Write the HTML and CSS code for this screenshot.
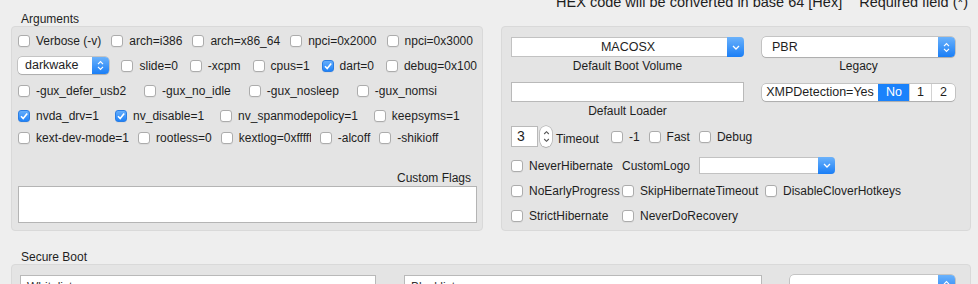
FILE: index.html
```html
<!DOCTYPE html>
<html lang="en">
<head>
    <meta charset="UTF-8">
    <meta name="viewport" content="width=device-width, initial-scale=1.0">
    <title>Boot Arguments</title>
    <link rel="stylesheet" href="styles.css">
</head>
<body>
<div class="window">
    <div class="columns">
        <!-- Arguments -->
        <section class="group">
            <div class="group-head"><h2>Arguments</h2></div>
            <div class="panel args">
                <div class="row r1">
                    <label class="check"><span class="box"></span>Verbose (-v)</label>
                    <label class="check"><span class="box"></span>arch=i386</label>
                    <label class="check"><span class="box"></span>arch=x86_64</label>
                    <label class="check"><span class="box"></span>npci=0x2000</label>
                    <label class="check"><span class="box"></span>npci=0x3000</label>
                </div>
                <div class="row r2">
                    <div class="popup dark">
                        <span class="value">darkwake</span>
                        <span class="arrow"><svg width="7" height="11" viewBox="0 0 7 11"><path d="M1 4.2l2.5-2.5L6 4.2M1 6.8l2.5 2.5L6 6.8" fill="none" stroke="#fff" stroke-width="1.2"/></svg></span>
                    </div>
                    <label class="check"><span class="box"></span>slide=0</label>
                    <label class="check"><span class="box"></span>-xcpm</label>
                    <label class="check"><span class="box"></span>cpus=1</label>
                    <label class="check"><span class="box on"><svg width="10" height="10" viewBox="0 0 10 10"><path d="M2 5.2l2.2 2.3L8.2 2.6" fill="none" stroke="#fff" stroke-width="1.6"/></svg></span>dart=0</label>
                    <label class="check"><span class="box"></span>debug=0x100</label>
                </div>
                <div class="row r3">
                    <label class="check"><span class="box"></span>-gux_defer_usb2</label>
                    <label class="check"><span class="box"></span>-gux_no_idle</label>
                    <label class="check"><span class="box"></span>-gux_nosleep</label>
                    <label class="check"><span class="box"></span>-gux_nomsi</label>
                </div>
                <div class="row r4">
                    <label class="check"><span class="box on"><svg width="10" height="10" viewBox="0 0 10 10"><path d="M2 5.2l2.2 2.3L8.2 2.6" fill="none" stroke="#fff" stroke-width="1.6"/></svg></span>nvda_drv=1</label>
                    <label class="check"><span class="box on"><svg width="10" height="10" viewBox="0 0 10 10"><path d="M2 5.2l2.2 2.3L8.2 2.6" fill="none" stroke="#fff" stroke-width="1.6"/></svg></span>nv_disable=1</label>
                    <label class="check"><span class="box"></span>nv_spanmodepolicy=1</label>
                    <label class="check"><span class="box"></span>keepsyms=1</label>
                </div>
                <div class="row r5">
                    <label class="check"><span class="box"></span>kext-dev-mode=1</label>
                    <label class="check"><span class="box"></span>rootless=0</label>
                    <label class="check"><span class="box"></span><span class="clip">kextlog=0xffffffff</span></label>
                    <label class="check"><span class="box"></span>-alcoff</label>
                    <label class="check"><span class="box"></span>-shikioff</label>
                </div>
                <div class="custom">
                    <div class="custom-label">Custom Flags</div>
                    <textarea class="flags"></textarea>
                </div>
            </div>
        </section>

        <!-- Boot -->
        <section class="group">
            <div class="group-head">
                <div class="note">
                    <span>HEX code will be converted in base 64 [Hex]</span>
                    <span>Required field (*)</span>
                </div>
            </div>
            <div class="panel boot">
                <div class="boot-top">
                    <div class="col">
                        <div class="popup square">
                            <span class="value center">MACOSX</span>
                            <span class="arrow"><svg width="8" height="5" viewBox="0 0 8 5"><path d="M1 1l3 3 3-3" fill="none" stroke="#fff" stroke-width="1.3"/></svg></span>
                        </div>
                        <div class="caption">Default Boot Volume</div>
                        <div class="field loader"></div>
                        <div class="caption">Default Loader</div>
                    </div>
                    <div class="col">
                        <div class="popup tall">
                            <span class="value">PBR</span>
                            <span class="arrow"><svg width="7" height="11" viewBox="0 0 7 11"><path d="M1 4.2l2.5-2.5L6 4.2M1 6.8l2.5 2.5L6 6.8" fill="none" stroke="#fff" stroke-width="1.2"/></svg></span>
                        </div>
                        <div class="caption">Legacy</div>
                        <div class="seg">
                            <span>XMPDetection=Yes</span>
                            <span class="sel">No</span>
                            <span>1</span>
                            <span>2</span>
                        </div>
                    </div>
                </div>

                <div class="timeout-row">
                    <div class="number">3</div>
                    <div class="stepper"><svg width="7" height="17" viewBox="0 0 7 17"><path d="M1.2 6l2.3-2.3L5.8 6M1.2 11l2.3 2.3L5.8 11" fill="none" stroke="#555" stroke-width="1.1"/></svg></div>
                    <span class="timeout-label">Timeout</span>
                    <div class="opts">
                        <label class="check"><span class="box"></span>-1</label>
                        <label class="check"><span class="box"></span>Fast</label>
                        <label class="check"><span class="box"></span>Debug</label>
                    </div>
                </div>

                <div class="flag-grid">
                    <label class="check"><span class="box"></span>NeverHibernate</label>
                    <div class="logo">
                        <span>CustomLogo</span>
                        <div class="popup square logo-pop">
                            <span class="value"></span>
                            <span class="arrow"><svg width="8" height="5" viewBox="0 0 8 5"><path d="M1 1l3 3 3-3" fill="none" stroke="#fff" stroke-width="1.3"/></svg></span>
                        </div>
                    </div>
                    <label class="check"><span class="box"></span>NoEarlyProgress</label>
                    <label class="check"><span class="box"></span>SkipHibernateTimeout</label>
                    <label class="check"><span class="box"></span>DisableCloverHotkeys</label>
                    <label class="check"><span class="box"></span>StrictHibernate</label>
                    <label class="check"><span class="box"></span>NeverDoRecovery</label>
                </div>
            </div>
        </section>
    </div>

    <!-- Secure Boot -->
    <section class="secure">
        <h2>Secure Boot</h2>
        <div class="panel secure-panel">
            <div class="field list">Whitelist</div>
            <div class="field list">Blacklist</div>
            <div class="popup tall">
                <span class="value"></span>
                <span class="arrow"><svg width="7" height="11" viewBox="0 0 7 11"><path d="M1 4.2l2.5-2.5L6 4.2M1 6.8l2.5 2.5L6 6.8" fill="none" stroke="#fff" stroke-width="1.2"/></svg></span>
            </div>
        </div>
    </section>
</div>
</body>
</html>
```

FILE: styles.css
```css
html, body {
    overflow: hidden;
}
body {
    margin: 0;
    background-color: #eeeeee;
    color: #1e1e1e;
    font-family: "Liberation Sans", Arial, sans-serif;
    font-size: 12px;
    line-height: 14px;
}
h2 {
    margin: 0;
    font-size: 12px;
    font-weight: normal;
}
.window {
    padding: 0 7px 0 11px;
}
.columns {
    display: grid;
    grid-template-columns: 472px 470px;
    column-gap: 18px;
}
.group-head {
    display: flex;
    flex-direction: column;
    height: 26px;
    box-sizing: border-box;
}
.group-head h2 {
    padding: 12px 0 0 10px;
}
.note {
    display: flex;
    justify-content: flex-end;
    gap: 17px;
    margin-top: -6px;
    padding-right: 3px;
    white-space: nowrap;
    font-size: 14.5px;
    line-height: 16px;
}
.panel {
    background-color: #e4e4e4;
    border: 1px solid #d9d9d9;
    border-radius: 4px;
    box-sizing: border-box;
}

/* checkboxes */
.check {
    display: flex;
    align-items: center;
    gap: 6px;
    white-space: nowrap;
}
.box {
    width: 12px;
    height: 12px;
    box-sizing: border-box;
    border: 1px solid #acacac;
    border-radius: 3px;
    background: #fff;
    box-shadow: 0 1px 0 rgba(0, 0, 0, 0.04);
    display: flex;
    align-items: center;
    justify-content: center;
    flex: none;
}
.box.on {
    background: linear-gradient(#66aefb, #1f82f8);
    border-color: #2b7ee4;
}
.clip {
    display: block;
    width: 72px;
    overflow: hidden;
}

/* popups */
.popup {
    display: flex;
    height: 17px;
    background: #fff;
    border-radius: 4px;
    box-shadow: 0 0 0 0.5px rgba(0, 0, 0, 0.28), 0 1px 1px rgba(0, 0, 0, 0.12);
}
.popup .value {
    flex: 1;
    padding-left: 7px;
    line-height: 17px;
    font-size: 12.5px;
}
.popup .value.center {
    text-align: center;
    padding-left: 17px;
}
.popup .arrow {
    width: 17px;
    flex: none;
    display: flex;
    align-items: center;
    justify-content: center;
    background: linear-gradient(#6bb2fb, #1a7ef6);
    border-radius: 0 4px 4px 0;
}
.popup.square {
    border-radius: 0 4px 4px 0;
    box-shadow: none;
    border: 1px solid #c2c2c2;
    border-right: none;
    box-sizing: border-box;
}
.popup.square .arrow {
    margin: -1px 0;
}
.popup.tall {
    height: 20px;
}
.popup.tall .value {
    line-height: 20px;
    padding-left: 10px;
}
.dark {
    width: 100px;
}

/* arguments panel */
.args {
    height: 205px;
    display: flex;
    flex-direction: column;
    gap: 8px;
    padding: 5px 5px 7px 6px;
}
.row {
    display: flex;
    align-items: center;
    height: 17px;
}
.r1 { gap: 10px; }
.r2 { gap: 12px; }
.r3 { gap: 18px; }
.r4 { gap: 16px; }
.r5 { gap: 9px; margin-top: -3px; }
.custom {
    margin-top: auto;
}
.custom-label {
    text-align: right;
    padding-right: 6px;
}
.flags {
    display: block;
    width: 100%;
    height: 37px;
    margin: 1px 0 0;
    box-sizing: border-box;
    border: 1px solid #b4b4b4;
    background: #fff;
    resize: none;
}

/* boot panel */
.boot {
    height: 205px;
    padding: 10px 15px 0 9px;
}
.boot-top {
    display: grid;
    grid-template-columns: 233px 193px;
    column-gap: 18px;
}
.col {
    display: flex;
    flex-direction: column;
}
.popup.square:not(.logo-pop) {
    height: 20px;
}
.popup.square:not(.logo-pop) .value {
    line-height: 18px;
}
.caption {
    margin-top: 2px;
    text-align: center;
}
.field {
    background: #fff;
    border: 1px solid #b9b9b9;
    box-sizing: border-box;
}
.loader {
    height: 20px;
    margin-top: 9px;
}
.seg {
    display: grid;
    grid-template-columns: 116px 31px 22px 1fr;
    height: 17px;
    margin-top: 11px;
    background: #fff;
    border-radius: 4px;
    overflow: hidden;
    box-shadow: 0 0 0 0.5px rgba(0, 0, 0, 0.28), 0 1px 1px rgba(0, 0, 0, 0.12);
    line-height: 17px;
    text-align: center;
    font-size: 12.5px;
}
.seg span + span {
    border-left: 1px solid #d2d2d2;
}
.seg .sel {
    background: #1a82fb;
    color: #fff;
    border-left-color: #1a82fb;
}
.timeout-row {
    display: flex;
    align-items: center;
    height: 21px;
    margin-top: 8px;
}
.number {
    width: 27px;
    height: 21px;
    box-sizing: border-box;
    background: #fff;
    border: 1px solid #b9b9b9;
    padding-left: 5px;
    font-size: 14px;
    line-height: 19px;
}
.stepper {
    width: 12px;
    height: 21px;
    margin-left: 2px;
    box-sizing: border-box;
    background: #fff;
    border-radius: 6px;
    box-shadow: 0 0 0 0.5px rgba(0, 0, 0, 0.3), 0 1px 1px rgba(0, 0, 0, 0.1);
    display: flex;
    align-items: center;
    justify-content: center;
}
.timeout-label {
    margin-left: 4px;
    padding-top: 4px;
}
.opts {
    display: flex;
    gap: 9px;
    margin-left: 12px;
}
.flag-grid {
    display: grid;
    grid-template-columns: 111px 143px auto;
    grid-auto-rows: 17px;
    row-gap: 8px;
    margin-top: 10px;
    align-items: center;
}
.logo {
    grid-column: span 2;
    display: flex;
    align-items: center;
    gap: 9px;
}
.logo-pop {
    width: 136px;
}

/* secure boot */
.secure {
    margin-top: 19px;
}
.secure h2 {
    padding-left: 10px;
}
.secure-panel {
    display: grid;
    grid-template-columns: 356px 358px 165px;
    column-gap: 28px;
    padding: 10px 0 20px 8px;
}
.list {
    height: 22px;
    padding: 4px 0 0 6px;
    color: #333;
}
```
